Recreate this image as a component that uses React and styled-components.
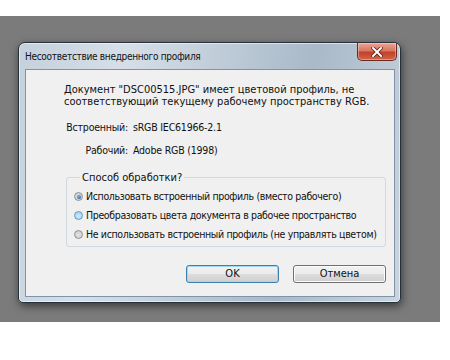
import React from "react";
import styled, { createGlobalStyle } from "styled-components";

const GlobalStyle = createGlobalStyle`
  html, body { margin: 0; padding: 0; background: #ffffff; }
  body { font-family: "DejaVu Sans Condensed", "DejaVu Sans", "Liberation Sans", sans-serif; }
`;

const Backdrop = styled.div`
  width: 440px;
  height: 306px;
  margin-top: 16px;
  background: #7b7b7b;
  padding: 26px 0 0 18px;
  box-sizing: border-box;
`;

const Window = styled.div`
  width: 383px;
  height: 261px;
  box-sizing: border-box;
  border: 1px solid #27313a;
  border-radius: 7px 7px 5px 5px;
  background: linear-gradient(100deg, #c4d0db 0%, #d6dfe8 25%, #b8c6d3 55%, #a9b9c8 70%, #c9d4de 100%);
  box-shadow: 1px 3px 8px rgba(0, 0, 0, 0.55), inset 0 0 0 1px rgba(255, 255, 255, 0.55);
  display: flex;
  flex-direction: column;
  padding: 0 5px 5px 6px;
`;

const TitleBar = styled.div`
  height: 26px;
  display: flex;
  justify-content: space-between;
  align-items: flex-start;
`;

const TitleText = styled.span`
  font-size: 10px;
  letter-spacing: -0.3px;
  line-height: 26px;
  color: #111;
  padding-top: 1px;
  white-space: nowrap;
`;

const CloseButton = styled.div`
  width: 40px;
  height: 18px;
  margin-right: -2px;
  box-sizing: border-box;
  border: 1px solid #6b2a1e;
  border-top: none;
  border-radius: 0 0 5px 5px;
  background: linear-gradient(to bottom, #e8a595 0%, #d8775f 45%, #c2412a 55%, #d0664b 100%);
  box-shadow: inset 0 0 0 1px rgba(255, 255, 255, 0.35);
  display: flex;
  align-items: center;
  justify-content: center;
`;

const Client = styled.div`
  flex: 1;
  border: 1px solid #8093a8;
  background: #f0f0f0;
  display: flex;
  flex-direction: column;
  font-size: 11px;
  color: #111;
`;

const Message = styled.div`
  margin: 14px 0 0 38px;
  line-height: 12px;
  white-space: nowrap;
`;

const InfoBlock = styled.div`
  margin: 13px 0 0 38px;
  display: flex;
  flex-direction: column;
  gap: 10px;
  line-height: 13px;
  font-size: 10.5px;
  letter-spacing: -0.2px;
`;

const InfoRow = styled.div`
  display: flex;
  gap: 5px;
  white-space: nowrap;
`;

const Label = styled.span`
  width: 64px;
  display: flex;
  justify-content: flex-end;
  flex-shrink: 0;
`;

const Group = styled.fieldset`
  margin: 14px 0 0 40px;
  width: 320px;
  box-sizing: border-box;
  border: 1px solid #d2d9df;
  border-radius: 3px;
  padding: 3px 0 2px 7px;
  min-width: 0;
`;

const Legend = styled.legend`
  padding: 0 2px;
  margin-left: 6px;
  line-height: 13px;
  white-space: nowrap;
`;

const RadioRow = styled.label`
  display: flex;
  align-items: center;
  gap: 3px;
  height: 19px;
  line-height: 19px;
  white-space: nowrap;
  font-size: 10.5px;
  letter-spacing: -0.35px;
`;

const RadioCircle = styled.span`
  width: 9px;
  height: 9px;
  border-radius: 50%;
  box-sizing: border-box;
  border: 1px solid ${(p) => (p.$hover ? "#5b9bcf" : "#8e8f8f")};
  background: ${(p) =>
    p.$hover
      ? "radial-gradient(circle at 50% 60%, #d2ecfb 0%, #a7d3f0 70%, #e9f5fd 100%)"
      : "radial-gradient(circle at 50% 60%, #e4e4e4 0%, #cfcfcf 70%, #f4f4f4 100%)"};
  display: flex;
  align-items: center;
  justify-content: center;
  flex-shrink: 0;
`;

const RadioDot = styled.span`
  width: 4px;
  height: 4px;
  border-radius: 50%;
  background: radial-gradient(circle at 40% 35%, #7fb4e0, #1c4f8c);
`;

const ButtonRow = styled.div`
  margin: 18px 8px 0 0;
  display: flex;
  justify-content: flex-end;
  gap: 14px;
`;

const Button = styled.div`
  width: 93px;
  height: 18px;
  box-sizing: border-box;
  border: 1px solid ${(p) => (p.$default ? "#3c7fb1" : "#707070")};
  border-radius: 3px;
  background: linear-gradient(to bottom, #f2f2f2 0%, #ebebeb 48%, #dddddd 52%, #cfcfcf 100%);
  box-shadow: inset 0 0 0 1px ${(p) => (p.$default ? "#9fd8f3" : "#fcfcfc")};
  font-size: 11px;
  line-height: 16px;
  text-align: center;
  color: #111;
`;

const radios = [
  { text: "Использовать встроенный профиль (вместо рабочего)", checked: true },
  { text: "Преобразовать цвета документа в рабочее пространство", hover: true },
  { text: "Не использовать встроенный профиль (не управлять цветом)" },
];

export default function App() {
  return (
    <>
      <GlobalStyle />
      <Backdrop>
        <Window>
          <TitleBar>
            <TitleText>Несоответствие внедренного профиля</TitleText>
            <CloseButton>
              <svg width="12" height="10" viewBox="0 0 12 10">
                <path d="M2 1 L10 9 M10 1 L2 9" stroke="#5a1a10" strokeWidth="3.6" strokeLinecap="square" />
                <path d="M2 1 L10 9 M10 1 L2 9" stroke="#ffffff" strokeWidth="2" strokeLinecap="square" />
              </svg>
            </CloseButton>
          </TitleBar>
          <Client>
            <Message>
              Документ "DSC00515.JPG" имеет цветовой профиль, не
              <br />
              соответствующий текущему рабочему пространству RGB.
            </Message>
            <InfoBlock>
              <InfoRow>
                <Label>Встроенный:</Label>
                <span>sRGB IEC61966-2.1</span>
              </InfoRow>
              <InfoRow>
                <Label>Рабочий:</Label>
                <span>Adobe RGB (1998)</span>
              </InfoRow>
            </InfoBlock>
            <Group>
              <Legend>Способ обработки?</Legend>
              {radios.map((r) => (
                <RadioRow key={r.text}>
                  <RadioCircle $hover={r.hover}>{r.checked && <RadioDot />}</RadioCircle>
                  <span>{r.text}</span>
                </RadioRow>
              ))}
            </Group>
            <ButtonRow>
              <Button $default>OK</Button>
              <Button>Отмена</Button>
            </ButtonRow>
          </Client>
        </Window>
      </Backdrop>
    </>
  );
}
